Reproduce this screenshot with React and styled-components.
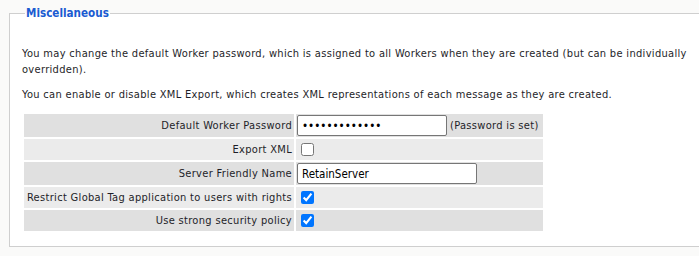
import styled, { createGlobalStyle } from "styled-components";

const GlobalStyle = createGlobalStyle`
  html, body {
    margin: 0;
    padding: 0;
    background: #fafaf9;
    overflow: hidden;
  }
  body {
    font-family: "DejaVu Sans Condensed", "DejaVu Sans", sans-serif;
    font-size: 11px;
    letter-spacing: 0.32px;
    color: #1e1e28;
  }
`;

const Page = styled.div`
  padding: 6px 0 0 9px;
`;

const Fieldset = styled.fieldset`
  width: 720px;
  margin: 0;
  padding: 0 12px 13px 12px;
  border: 1px solid #cfcfcf;
  background: #fff;
`;

const Legend = styled.legend`
  color: #1a5bd1;
  font-weight: bold;
  font-size: 11.6px;
  letter-spacing: 0;
  padding: 0 1px;
  margin-left: 3px;
`;

const Text = styled.p`
  margin: 0 0 9px 0;
  line-height: 16px;
  max-width: 690px;

  &:first-of-type {
    margin-top: 26px;
  }
`;

const Table = styled.table`
  width: 523px;
  table-layout: fixed;
  border-spacing: 2px;
  margin-top: 4px;
`;

const Row = styled.tr`
  background: ${(p) => (p.$alt ? "#ebebeb" : "#e0e0e0")};
`;

const Label = styled.td`
  width: 266px;
  text-align: right;
  padding: 0 2px;
  height: ${(p) => (p.$tall ? "23px" : "21px")};
  white-space: nowrap;
`;

const Value = styled.td`
  width: 245px;
  padding: 0 1px;
  white-space: nowrap;
`;

const Input = styled.input`
  box-sizing: border-box;
  width: ${(p) => p.$w}px;
  height: 21px;
  border: 1px solid #767676;
  border-radius: 2px;
  padding: 1px 4px;
  font-family: inherit;
  font-size: 11.5px;
  color: #000;
  vertical-align: middle;
  margin: 0 3px 0 0;
`;

const Check = styled.input`
  width: 13px;
  height: 13px;
  margin: 3px 3px 3px 4px;
  vertical-align: middle;
`;

const Note = styled.span`
  vertical-align: middle;
`;

export default function App() {
  return (
    <>
      <GlobalStyle />
      <Page>
        <Fieldset>
          <Legend>Miscellaneous</Legend>
          <Text>
            You may change the default Worker password, which is assigned to all
            Workers when they are created (but can be individually overridden).
          </Text>
          <Text>
            You can enable or disable XML Export, which creates XML
            representations of each message as they are created.
          </Text>
          <Table>
            <tbody>
              <Row>
                <Label $tall>Default Worker Password</Label>
                <Value>
                  <Input type="password" $w={150} defaultValue="retainserver1" />
                  <Note>(Password is set)</Note>
                </Value>
              </Row>
              <Row $alt>
                <Label>Export XML</Label>
                <Value>
                  <Check type="checkbox" />
                </Value>
              </Row>
              <Row>
                <Label $tall>Server Friendly Name</Label>
                <Value>
                  <Input type="text" $w={180} defaultValue="RetainServer" />
                </Value>
              </Row>
              <Row $alt>
                <Label>Restrict Global Tag application to users with rights</Label>
                <Value>
                  <Check type="checkbox" defaultChecked />
                </Value>
              </Row>
              <Row>
                <Label>Use strong security policy</Label>
                <Value>
                  <Check type="checkbox" defaultChecked />
                </Value>
              </Row>
            </tbody>
          </Table>
        </Fieldset>
      </Page>
    </>
  );
}
